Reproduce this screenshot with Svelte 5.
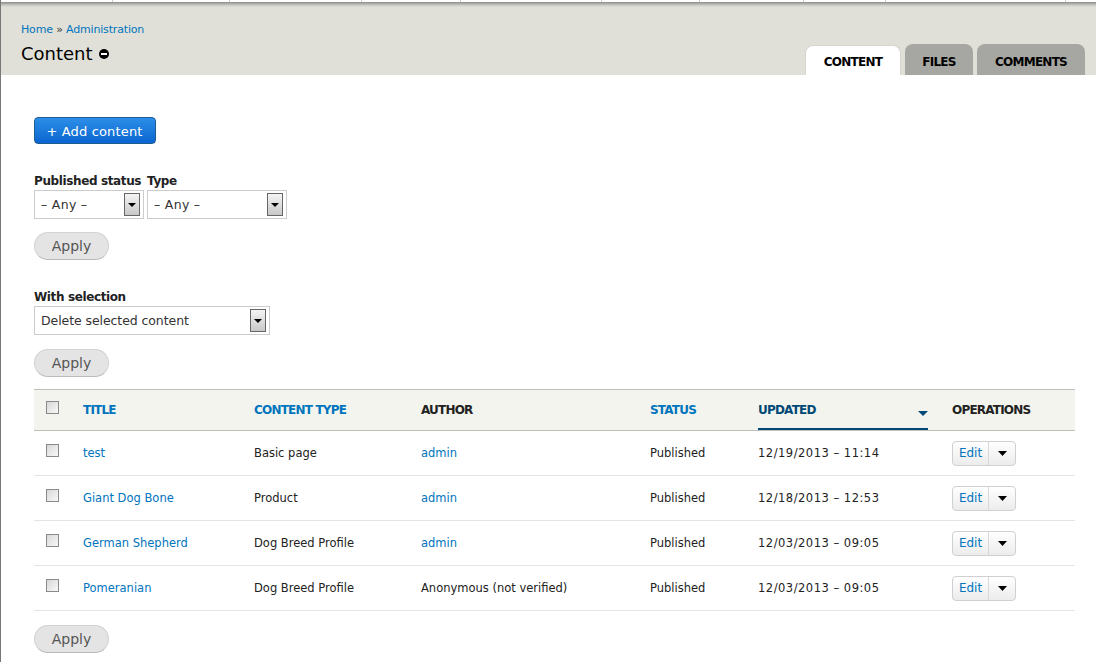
<script>
  const rows = [
    { title: 'test', type: 'Basic page', author: 'admin', link: true, updated: '12/19/2013 – 11:14' },
    { title: 'Giant Dog Bone', type: 'Product', author: 'admin', link: true, updated: '12/18/2013 – 12:53' },
    { title: 'German Shepherd', type: 'Dog Breed Profile', author: 'admin', link: true, updated: '12/03/2013 – 09:05' },
    { title: 'Pomeranian', type: 'Dog Breed Profile', author: 'Anonymous (not verified)', link: false, updated: '12/03/2013 – 09:05' }
  ];
  const dividers = [113, 117, 132, 99, 141, 98, 104, 82, 180];
</script>

<div class="page">
  <div class="toolbar">
    {#each dividers as w}
      <span class="seg" style="width:{w}px"></span>
    {/each}
  </div>
  <header class="head">
    <div class="head-left">
      <div class="crumb"><a href="#h">Home</a> » <a href="#a">Administration</a></div>
      <h1>Content <svg class="short" width="10" height="10" viewBox="0 0 10 10"><circle cx="5" cy="5" r="5" fill="#000"/><rect x="2" y="4" width="6" height="2" fill="#fff"/></svg></h1>
    </div>
    <nav class="tabs">
      <a class="tab active" href="#c">CONTENT</a>
      <a class="tab t-files" href="#f">FILES</a>
      <a class="tab t-comments" href="#m">COMMENTS</a>
    </nav>
  </header>

  <main class="main">
    <a class="add" href="#add">+ Add content</a>

    <div class="filters">
      <div class="field">
        <label for="s1">Published status</label>
        <div class="select w110" id="s1"><span class="any">– Any –</span><i class="arrow"><b></b></i></div>
      </div>
      <div class="field">
        <label for="s2">Type</label>
        <div class="select w140" id="s2"><span class="any">– Any –</span><i class="arrow"><b></b></i></div>
      </div>
    </div>
    <button class="apply first">Apply</button>

    <div class="field bulk">
      <label for="s3">With selection</label>
      <div class="select w236" id="s3"><span class="del">Delete selected content</span><i class="arrow"><b></b></i></div>
    </div>
    <button class="apply">Apply</button>

    <table>
      <colgroup>
        <col style="width:49px" /><col style="width:171px" /><col style="width:167px" /><col style="width:229px" /><col style="width:108px" /><col style="width:194px" /><col />
      </colgroup>
      <thead>
        <tr>
          <th><span class="cb"></span></th>
          <th><a href="#t">TITLE</a></th>
          <th><a href="#ct">CONTENT TYPE</a></th>
          <th>AUTHOR</th>
          <th><a href="#st">STATUS</a></th>
          <th class="sorted"><a href="#u"><span>UPDATED</span><svg width="10" height="5" viewBox="0 0 10 5"><path d="M0 0h10L5 5z" fill="#004875"/></svg></a></th>
          <th>OPERATIONS</th>
        </tr>
      </thead>
      <tbody>
        {#each rows as r}
          <tr>
            <td><span class="cb"></span></td>
            <td><a href="#r">{r.title}</a></td>
            <td>{r.type}</td>
            <td>{#if r.link}<a href="#p">{r.author}</a>{:else}{r.author}{/if}</td>
            <td>Published</td>
            <td class="date">{r.updated}</td>
            <td><span class="ops"><a href="#e">Edit</a><i><svg width="9" height="5" viewBox="0 0 9 5"><path d="M0 0h9L4.500 5z" fill="#000"/></svg></i></span></td>
          </tr>
        {/each}
      </tbody>
    </table>
    <button class="apply">Apply</button>
  </main>
</div>

<style>
  :global(body) { margin: 0; background: #fff; }
  .page {
    height: 662px; overflow: hidden; box-sizing: border-box;
    border-left: 1px solid #777; color: #222;
    font-family: "DejaVu Sans", Verdana, sans-serif; font-size: 12px;
  }
  a { color: #0074bd; text-decoration: none; }
  .toolbar { display: flex; height: 2px; background: #fff; margin-left: -1px; }
  .seg { box-sizing: border-box; border-right: 1px solid #ccc; }
  .head {
    display: flex; justify-content: space-between; align-items: flex-end;
    height: 73px; box-sizing: border-box; padding: 0 11px 0 20px;
    background: linear-gradient(#8c8c88, #c6c6c0 3px, #e0e0d8 5px);
  }
  .head-left { align-self: flex-start; padding-top: 21px; }
  .crumb { font-size: 11px; line-height: 13px; color: #333; letter-spacing: -0.17px; }
  h1 { margin: 7px 0 0; font-size: 18px; font-weight: 400; line-height: 22px; color: #000; display: flex; align-items: center; gap: 6px; }
  .tabs { display: flex; gap: 4px; align-items: flex-end; }
  .tab {
    box-sizing: border-box; height: 31px; padding-top: 11px; text-align: center;
    font-size: 12px; font-weight: 700; color: #000; letter-spacing: -0.75px;
    background: #a6a7a2; border-radius: 8px 8px 0 0; width: 68px; line-height: 14px;
  }
  .tab.active { background: #fff; width: 96px; height: 30px; border: 1px solid #d6d6ce; border-bottom: 0; padding-top: 9px; }
  .t-comments { width: 108px; }
  .main { padding: 42px 0 0 33px; width: 1041px; }
  .add {
    display: block; box-sizing: border-box; width: 122px; height: 27px; line-height: 27px; text-align: center;
    padding-right: 1px; color: #fff; font-size: 13px; letter-spacing: 0.15px; border: 1px solid #1e5c90; border-radius: 4px;
    background: linear-gradient(#2d8ee8, #0a66d0);
  }
  .filters { display: flex; gap: 3px; margin-top: 30px; }
  .field label { display: block; font-weight: 700; font-size: 12px; line-height: 14px; color: #222; margin-bottom: 2px; letter-spacing: -0.38px; }
  .select {
    box-sizing: border-box; height: 29px; display: flex; align-items: center; justify-content: space-between;
    border: 1px solid #ccc; padding: 0 3px 0 6px; font-size: 12.500px; color: #333; background: #fff;
  }
  .any { letter-spacing: 0.3px; }
  .del { letter-spacing: -0.08px; }
  .w110 { width: 110px; }
  .w140 { width: 140px; }
  .w236 { width: 236px; }
  .arrow {
    box-sizing: border-box; width: 16px; height: 23px; border: 1px solid #666;
    background: linear-gradient(#f4f4f4, #c8c8c8); display: flex; align-items: center; justify-content: center;
  }
  .arrow b { width: 0; height: 0; border: 4px solid transparent; border-top-color: #000; border-bottom: 0; }
  .apply {
    display: block; box-sizing: border-box; width: 75px; height: 28px; margin-top: 14px; padding: 0;
    font: 14px "DejaVu Sans", Verdana, sans-serif; color: #555;
    background: #e4e4e4; border: 1px solid #d2d2d2; border-bottom-color: #bbb; border-radius: 14px;
  }
  .apply.first { margin-top: 13px; }
  .bulk { margin-top: 30px; }
  table { margin-top: 12px; width: 1041px; border-collapse: collapse; table-layout: fixed; }
  thead tr { background: #f3f4ee; border-top: 1px solid #bebfb9; border-bottom: 1px solid #bebfb9; }
  th { height: 40px; padding: 0; text-align: left; font-size: 12px; font-weight: 700; color: #222; letter-spacing: -0.8px; }
  th a { font-weight: 700; }
  th:first-child, td:first-child { padding-left: 12px; }
  .sorted a { display: flex; justify-content: space-between; align-items: center; height: 40px; width: 170px; box-sizing: border-box; color: #004875; border-bottom: 2px solid #004875; padding-top: 2px; }
  .sorted svg { margin-top: 6px; }
  td { height: 44px; padding: 0; font-size: 11.500px; color: #222; }
  .date { letter-spacing: 0.5px; }
  tbody tr { border-bottom: 1px solid #e6e4df; }
  .cb {
    display: block; box-sizing: border-box; width: 13px; height: 13px; margin-top: -6px;
    border: 1px solid #8a8a8a; background: linear-gradient(135deg, #d8d8d8, #f8f8f8);
  }
  .ops {
    display: inline-flex; align-items: center; box-sizing: border-box; height: 25px; width: 64px;
    border: 1px solid #d0d0d0; border-radius: 4px; background: linear-gradient(#fff, #ececec);
    font-size: 12px; vertical-align: middle; letter-spacing: 0; padding-bottom: 0;
  }
  .ops a { width: 35px; text-align: center; }
  .ops i { flex: 1; height: 100%; border-left: 1px solid #d8d8d8; display: flex; align-items: center; justify-content: center; }
</style>
